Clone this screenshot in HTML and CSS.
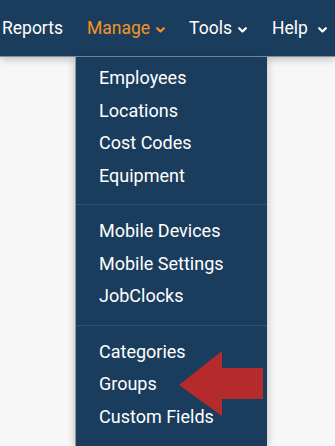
FILE: index.html
```html
<!DOCTYPE html>
<html lang="en">
<head>
  <meta charset="UTF-8" />
  <title>Manage</title>
  <link rel="stylesheet" href="styles.css">
</head>
<body>
  <header class="topbar">
    <nav class="nav">
      <a class="nav-item">Reports</a>
      <div class="nav-item nav-active">
        Manage
        <svg class="chev" width="9" height="6" viewBox="0 0 9 6"><path d="M1.2 1.2 L4.5 4.5 L7.8 1.2" /></svg>
      </div>
      <div class="nav-item">
        Tools
        <svg class="chev" width="9" height="6" viewBox="0 0 9 6"><path d="M1.2 1.2 L4.5 4.5 L7.8 1.2" /></svg>
      </div>
      <div class="nav-item nav-help">
        Help
        <svg class="chev" width="9" height="6" viewBox="0 0 9 6"><path d="M1.2 1.2 L4.5 4.5 L7.8 1.2" /></svg>
      </div>
    </nav>
  </header>

  <div class="dropdown">
    <ul class="menu-group first">
      <li>Employees</li>
      <li>Locations</li>
      <li>Cost Codes</li>
      <li>Equipment</li>
    </ul>
    <ul class="menu-group">
      <li>Mobile Devices</li>
      <li>Mobile Settings</li>
      <li>JobClocks</li>
    </ul>
    <ul class="menu-group">
      <li>Categories</li>
      <li>Groups</li>
      <li>Custom Fields</li>
    </ul>
  </div>

  <svg class="pointer" width="84" height="65" viewBox="0 0 84 65">
    <polygon points="0,34 43,0 43,17 84,17 84,48 43,48 43,65" />
  </svg>
</body>
</html>
```

FILE: styles.css
```css
:root {
  --navy: #1b3d5d;
  --navy-line: #2a5379;
  --orange: #f7941d;
  --page: #f7f7f7;
  --arrow: #b52a2a;
}

html, body {
  margin: 0;
  height: 100%;
  overflow: hidden;
}

body {
  background: var(--page);
  font-family: Roboto, 'Liberation Sans', sans-serif;
  position: relative;
}

.topbar {
  height: 56px;
  background: var(--navy);
  border-bottom: 1px solid #7f8f9e;
  box-shadow: 0 2px 8px rgba(0, 0, 0, 0.25);
}

.nav {
  display: flex;
  align-items: center;
  height: 100%;
  padding-left: 2px;
  white-space: nowrap;
}

.nav-item {
  display: flex;
  align-items: center;
  color: #fff;
  font-size: 17.5px;
  margin-right: 24px;
}

.nav-item .chev {
  margin-left: 6px;
  margin-top: 3px;
  fill: none;
  stroke: #fff;
  stroke-width: 2.2;
  stroke-linecap: round;
  stroke-linejoin: round;
}

.nav-help {
  margin-left: 1px;
}

.nav-help .chev {
  margin-left: 10px;
}

.nav-active {
  color: var(--orange);
}

.nav-active .chev {
  stroke: var(--orange);
}

/* open Manage menu */
.dropdown {
  position: absolute;
  top: 57px;
  left: 75px;
  width: 191px;
  bottom: 0;
  background: var(--navy);
  border-left: 1px solid #8a97a3;
  box-shadow: 0 2px 8px rgba(0, 0, 0, 0.25);
}

.menu-group {
  list-style: none;
  margin: 0;
  padding: 10px 0 12px 23px;
  border-top: 1px solid var(--navy-line);
}

.menu-group.first {
  padding-top: 5px;
  border-top: none;
}

.menu-group li {
  height: 32.5px;
  line-height: 32.5px;
  color: #fff;
  font-size: 18px;
}

.pointer {
  position: absolute;
  left: 179px;
  top: 351px;
  fill: var(--arrow);
}
```
